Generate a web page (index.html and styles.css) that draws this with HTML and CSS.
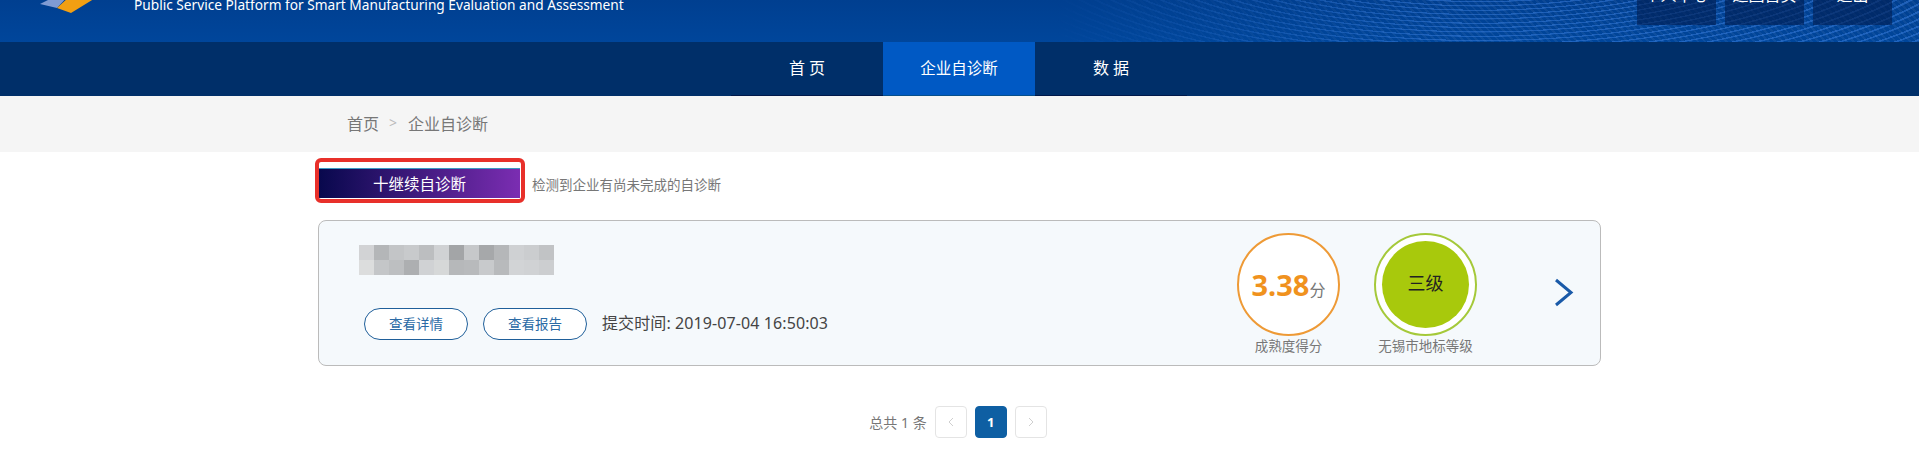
FILE: index.html
```html
<!DOCTYPE html>
<html lang="zh-CN">

<head>
  <meta charset="UTF-8">
  <title>企业自诊断</title>
  <link rel="stylesheet" href="styles.css">
</head>

<body>
  <header class="top">
    <div class="brand">
      <svg class="logo" width="60" height="18" viewBox="0 0 60 18">
        <polygon points="0,9 18,0 29,0 17,13" fill="#7f9bd3" />
        <polygon points="29,2 57,2 31,18 17,13" fill="#f29f12" />
      </svg>
      <p class="brand-text">Public Service Platform for Smart Manufacturing Evaluation and Assessment</p>
    </div>
    <div class="top-links">
      <a class="top-link">个人中心</a>
      <a class="top-link">返回首页</a>
      <a class="top-link">退出</a>
    </div>
  </header>

  <nav class="nav">
    <a class="nav-item">首 页</a>
    <a class="nav-item active">企业自诊断</a>
    <a class="nav-item">数 据</a>
  </nav>

  <div class="crumbs">
    <div class="crumbs-inner">
      <span>首页</span>
      <span class="crumbs-sep">&gt;</span>
      <span>企业自诊断</span>
    </div>
  </div>

  <main class="content">
    <div class="toolbar">
      <button type="button" class="continue-btn">十继续自诊断</button>
      <span class="toolbar-note">检测到企业有尚未完成的自诊断</span>
    </div>

    <section class="card">
      <div class="card-info">
        <svg class="mosaic" width="195" height="30" viewBox="0 0 13 2" shape-rendering="crispEdges">
          <rect x="0" y="0" width="1" height="1" fill="#d2d3d5" />
          <rect x="1" y="0" width="1" height="1" fill="#b4b6b8" />
          <rect x="2" y="0" width="1" height="1" fill="#c3c5c7" />
          <rect x="3" y="0" width="1" height="1" fill="#c8cacc" />
          <rect x="4" y="0" width="1" height="1" fill="#bcbec0" />
          <rect x="5" y="0" width="1" height="1" fill="#d0d2d4" />
          <rect x="6" y="0" width="1" height="1" fill="#a3a5a7" />
          <rect x="7" y="0" width="1" height="1" fill="#c6c8ca" />
          <rect x="8" y="0" width="1" height="1" fill="#a6a8aa" />
          <rect x="9" y="0" width="1" height="1" fill="#b5b7b9" />
          <rect x="10" y="0" width="1" height="1" fill="#cfd1d3" />
          <rect x="11" y="0" width="1" height="1" fill="#cbcdcf" />
          <rect x="12" y="0" width="1" height="1" fill="#c1c3c5" />
          <rect x="0" y="1" width="1" height="1" fill="#dcdddd" />
          <rect x="1" y="1" width="1" height="1" fill="#c4c6c8" />
          <rect x="2" y="1" width="1" height="1" fill="#bdbfc1" />
          <rect x="3" y="1" width="1" height="1" fill="#adafb1" />
          <rect x="4" y="1" width="1" height="1" fill="#d0d2d4" />
          <rect x="5" y="1" width="1" height="1" fill="#d6d8d8" />
          <rect x="6" y="1" width="1" height="1" fill="#b6b8ba" />
          <rect x="7" y="1" width="1" height="1" fill="#b8babc" />
          <rect x="8" y="1" width="1" height="1" fill="#c8cacc" />
          <rect x="9" y="1" width="1" height="1" fill="#b8babc" />
          <rect x="10" y="1" width="1" height="1" fill="#d2d4d6" />
          <rect x="11" y="1" width="1" height="1" fill="#d0d2d4" />
          <rect x="12" y="1" width="1" height="1" fill="#ccced0" />
        </svg>
        <div class="card-actions">
          <a class="pill">查看详情</a>
          <a class="pill">查看报告</a>
          <span class="submit-time">提交时间: 2019-07-04 16:50:03</span>
        </div>
      </div>

      <div class="metrics">
        <div class="metric">
          <div class="circle score"><b>3.38</b><span>分</span></div>
          <p class="metric-label">成熟度得分</p>
        </div>
        <div class="metric">
          <div class="circle grade"><div class="grade-fill">三级</div></div>
          <p class="metric-label">无锡市地标等级</p>
        </div>
      </div>

      <svg class="card-arrow" width="20" height="29" viewBox="0 0 20 29">
        <path d="M2 2 L17 14.5 L2 27" fill="none" stroke="#1a5aa8" stroke-width="3" />
      </svg>
    </section>

    <div class="pager">
      <span class="pager-total">总共 1 条</span>
      <a class="page-btn">
        <svg width="6" height="10" viewBox="0 0 6 10"><path d="M5 1 L1 5 L5 9" fill="none" stroke="#cfcfcf" /></svg>
      </a>
      <a class="page-btn current">1</a>
      <a class="page-btn">
        <svg width="6" height="10" viewBox="0 0 6 10"><path d="M1 1 L5 5 L1 9" fill="none" stroke="#cfcfcf" /></svg>
      </a>
    </div>
  </main>
</body>

</html>
```

FILE: styles.css
```css
body {
  margin: 0;
  font-family: "Noto Sans", "Noto Sans CJK SC", sans-serif;
  background: #fff;
  color: #444;
}

p {
  margin: 0;
}

.top {
  position: relative;
  display: flex;
  justify-content: space-between;
  align-items: flex-end;
  height: 42px;
  overflow: hidden;
  background: linear-gradient(#003f90, #00469b);
}

.top::before {
  content: "";
  position: absolute;
  inset: 0;
  background:
    repeating-radial-gradient(ellipse 900px 300px at 1480px -90px, rgba(70, 140, 240, 0.4) 0 3px, transparent 4px 13px),
    repeating-linear-gradient(45deg, rgba(255, 255, 255, 0.05) 0 2px, transparent 2px 5px);
  -webkit-mask-image: linear-gradient(90deg, transparent 55%, #000 75%);
  mask-image: linear-gradient(90deg, transparent 55%, #000 75%);
}

.brand {
  position: relative;
  display: flex;
  align-items: flex-start;
  padding-left: 40px;
}

.logo {
  margin: 0 34px 24px 0;
}

.brand-text {
  margin-bottom: 27px;
  color: #fff;
  font-size: 13.7px;
  line-height: 20px;
  white-space: nowrap;
}

.top-links {
  position: relative;
  display: flex;
  gap: 9px;
  margin: 0 27px 17px 0;
}

.top-link {
  width: 79px;
  height: 60px;
  background: rgba(0, 28, 80, 0.6);
  color: #fff;
  font-size: 16px;
  line-height: 60px;
  text-align: center;
}

.nav {
  display: flex;
  justify-content: center;
  height: 54px;
  padding-right: 1px;
  background: #002f69;
}

.nav-item {
  width: 152px;
  height: 53px;
  border-bottom: 1px solid #00184a;
  color: #fff;
  font-size: 16px;
  line-height: 52px;
  text-align: center;
}

.nav-item.active {
  background: #0059c4;
  border-bottom-color: #064f8c;
  font-size: 15.5px;
}

.crumbs {
  height: 56px;
  background: #f5f5f5;
}

.crumbs-inner {
  display: flex;
  align-items: center;
  gap: 10px;
  width: 1283px;
  height: 53px;
  margin: 0 auto;
  padding-left: 29px;
  box-sizing: border-box;
  color: #777;
  font-size: 16px;
}

.crumbs-sep {
  margin-right: 1px;
  color: #bbb;
  font-size: 14px;
}

.content {
  width: 1283px;
  margin: 0 auto;
}

.toolbar {
  display: flex;
  align-items: center;
  gap: 12px;
  margin-top: 16px;
}

.continue-btn {
  position: relative;
  width: 201px;
  height: 30px;
  margin-left: 1px;
  padding: 0;
  border: 0;
  border-top: 1px solid #3b9ac4;
  background: linear-gradient(90deg, #08084d, #7b2db2);
  color: #fff;
  font-family: inherit;
  font-size: 15.5px;
}

/* the red mark around the button */
.continue-btn::after {
  content: "";
  position: absolute;
  inset: -11px -5px -5px -4px;
  border: 4px solid #e8302a;
  border-radius: 6px;
}

.toolbar-note {
  margin-top: 1px;
  color: #777;
  font-size: 13.5px;
}

.card {
  display: flex;
  align-items: flex-start;
  height: 146px;
  box-sizing: border-box;
  margin-top: 22px;
  border: 1px solid #bbb;
  border-radius: 8px;
  background: #f5f9fc;
}

.card-info {
  flex: 1;
  padding: 24px 0 0 40px;
}

.mosaic {
  display: block;
}

.card-actions {
  display: flex;
  align-items: center;
  gap: 15px;
  margin: 33px 0 0 5px;
}

.pill {
  width: 102px;
  height: 30px;
  border: 1px solid #1f5f9a;
  border-radius: 16px;
  background: #fff;
  color: #2a6aa5;
  font-size: 13.5px;
  line-height: 30px;
  text-align: center;
}

.submit-time {
  margin-bottom: 5px;
  color: #444;
  font-size: 16px;
  letter-spacing: 0.1px;
}

.metrics {
  display: flex;
  gap: 34px;
  margin-top: 12px;
}

.metric {
  width: 103px;
  text-align: center;
}

.circle {
  display: flex;
  justify-content: center;
  align-items: center;
  width: 103px;
  height: 103px;
  box-sizing: border-box;
  border-radius: 50%;
  background: #fff;
}

.score {
  border: 2px solid #ee9a36;
  color: #777;
  font-size: 16px;
}

.score b {
  color: #f0921e;
  font-size: 29px;
}

.score span {
  margin-top: 8px;
}

.grade {
  border: 2px solid #a5c93a;
}

.grade-fill {
  width: 87px;
  height: 87px;
  border-radius: 50%;
  background: #a8c90c;
  color: #222;
  font-size: 18px;
  line-height: 84px;
}

.metric-label {
  color: #777;
  font-size: 13.5px;
  line-height: 20px;
  white-space: nowrap;
}

.card-arrow {
  margin: 57px 26px 0 77px;
}

.pager {
  display: flex;
  justify-content: center;
  align-items: center;
  gap: 8px;
  margin-top: 40px;
  padding-right: 3px;
  color: #777;
  font-size: 14px;
}

.page-btn {
  display: flex;
  justify-content: center;
  align-items: center;
  width: 30px;
  height: 30px;
  border: 1px solid #e4e4e4;
  border-radius: 4px;
  background: #fff;
  font-size: 13px;
}

.page-btn.current {
  border-color: #0e5fa3;
  background: #0e5fa3;
  color: #fff;
  font-weight: 700;
}
```
